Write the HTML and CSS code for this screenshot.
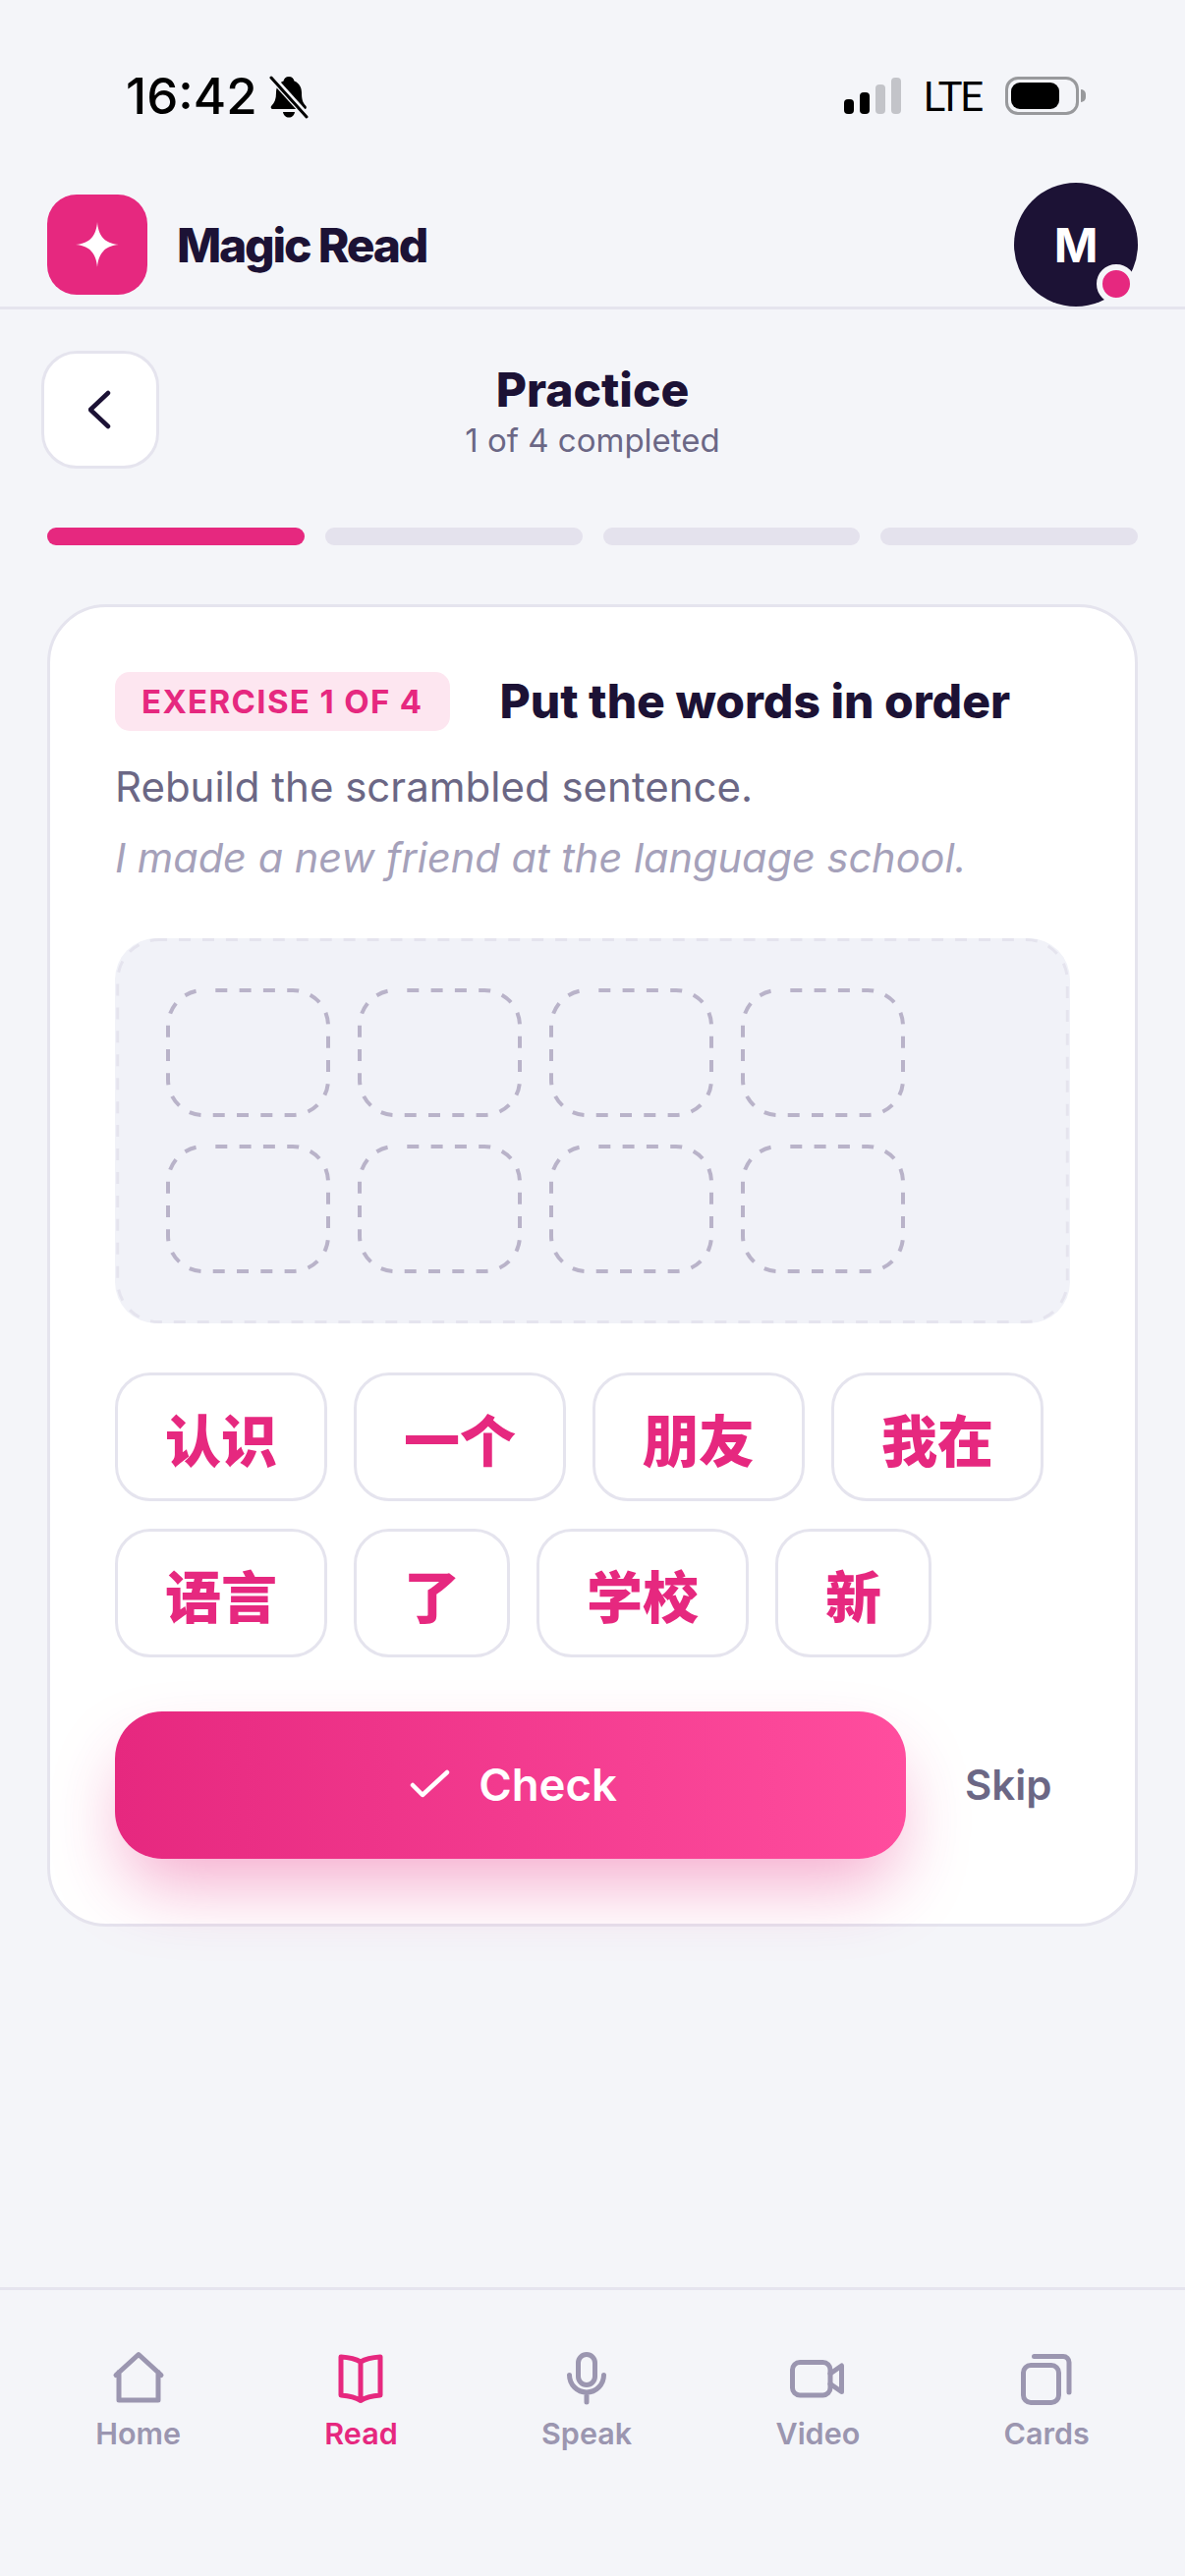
FILE: index.html
```html
<!DOCTYPE html>
<html lang="en">
<head>
  <meta charset="UTF-8">
  <meta name="viewport" content="width=device-width, initial-scale=1.0">
  <title>Magic Read - Practice</title>
  <link rel="stylesheet" href="styles.css">
</head>
<body>
  <div class="app">
    <div class="status-bar">
      <div class="status-left">
        <span class="time">16:42</span>
        <svg class="bell" viewBox="0 0 40 44">
          <path d="M20 1c3 0 5 2 5.500 4.500 5 2 7.500 6.500 7.500 12 0 6 1 10 4 13 1.500 1.500 1 3.500-1 3.500H4c-2.500 0-3-2-1.500-3.500 3-3 4.500-7 4.500-13 0-5.500 2.500-10 7.500-12C15 3 17 1 20 1z"/>
          <path d="M14 37h12c-.5 3.500-3 5.500-6 5.500s-5.500-2-6-5.500z"/>
          <path class="bell-gap" d="M1 0l38 42"/>
          <path class="bell-line" d="M2 2l36 40"/>
        </svg>
      </div>
      <div class="status-right">
        <div class="signal">
          <span class="bar bar-1"></span>
          <span class="bar bar-2"></span>
          <span class="bar bar-3"></span>
          <span class="bar bar-4"></span>
        </div>
        <span class="network">LTE</span>
        <div class="battery"><span class="battery-level"></span></div>
        <span class="battery-tip"></span>
      </div>
    </div>

    <header class="app-header">
      <div class="brand">
        <div class="brand-logo">
          <svg viewBox="0 0 44 46" width="44" height="46">
            <path d="M22 0c1 13 7 22 22 23C29 24 23 33 22 46 21 33 15 24 0 23 15 22 21 13 22 0z" fill="#fff"/>
          </svg>
        </div>
        <span class="brand-name">Magic Read</span>
      </div>
      <div class="avatar">
        M
        <span class="avatar-dot"></span>
      </div>
    </header>

    <main class="content">
      <div class="page-head">
        <button type="button" class="back-btn" aria-label="Back">
          <svg viewBox="0 0 24 40" width="24" height="40">
            <path d="M20 3L2 20l0 0L20 37" fill="none" stroke="#1c1235" stroke-width="4.500" stroke-linecap="round" stroke-linejoin="round"/>
          </svg>
        </button>
        <div class="page-title">
          <h1>Practice</h1>
          <p>1 of 4 completed</p>
        </div>
      </div>

      <div class="progress">
        <span class="step done"></span>
        <span class="step"></span>
        <span class="step"></span>
        <span class="step"></span>
      </div>

      <section class="card">
        <div class="card-head">
          <span class="chip">EXERCISE 1 OF 4</span>
          <h2>Put the words in order</h2>
        </div>
        <p class="hint">Rebuild the scrambled sentence.</p>
        <p class="translation">I made a new friend at the language school.</p>

        <div class="drop-zone">
          <svg class="zone-outline" viewBox="0 0 972 393"><rect x="1.500" y="1.500" width="969" height="390" rx="42"/></svg>
          <svg class="slot" viewBox="0 0 167 131"><rect x="2" y="2" width="163" height="127" rx="36"/></svg>
          <svg class="slot" viewBox="0 0 167 131"><rect x="2" y="2" width="163" height="127" rx="36"/></svg>
          <svg class="slot" viewBox="0 0 167 131"><rect x="2" y="2" width="163" height="127" rx="36"/></svg>
          <svg class="slot" viewBox="0 0 167 131"><rect x="2" y="2" width="163" height="127" rx="36"/></svg>
          <svg class="slot" viewBox="0 0 167 131"><rect x="2" y="2" width="163" height="127" rx="36"/></svg>
          <svg class="slot" viewBox="0 0 167 131"><rect x="2" y="2" width="163" height="127" rx="36"/></svg>
          <svg class="slot" viewBox="0 0 167 131"><rect x="2" y="2" width="163" height="127" rx="36"/></svg>
          <svg class="slot" viewBox="0 0 167 131"><rect x="2" y="2" width="163" height="127" rx="36"/></svg>
        </div>

        <div class="word-bank" lang="zh-CN">
          <button type="button" class="word">认识</button>
          <button type="button" class="word">一个</button>
          <button type="button" class="word">朋友</button>
          <button type="button" class="word">我在</button>
          <button type="button" class="word">语言</button>
          <button type="button" class="word">了</button>
          <button type="button" class="word">学校</button>
          <button type="button" class="word">新</button>
        </div>

        <div class="actions">
          <button type="button" class="check-btn">
            <svg viewBox="0 0 48 30" width="48" height="30">
              <path d="M9 16l10 10L44 3" fill="none" stroke="#fff" stroke-width="4.500" stroke-linecap="round" stroke-linejoin="round"/>
            </svg>
            Check
          </button>
          <button type="button" class="skip-btn">Skip</button>
        </div>
      </section>
    </main>

    <nav class="tab-bar">
      <a class="tab">
        <svg viewBox="0 0 24 24"><path d="M2.800 11L12 2.600l9.200 8.400M4 9.800V21.200h16V9.800"/></svg>
        Home
      </a>
      <a class="tab active">
        <svg viewBox="0 0 24 24"><path d="M12 5.600C10 4.400 7 3.800 4 3.600v15.600c3 .2 6 .8 8 2.200 2-1.400 5-2 8-2.200V3.600c-3 .2-6 .8-8 2zM12 5.600v15.800"/></svg>
        Read
      </a>
      <a class="tab">
        <svg viewBox="0 0 24 24"><rect x="8.600" y="2.600" width="6.800" height="12.400" rx="3.400"/><path d="M5 11a7 7 0 0 0 14 0M12 18v4"/></svg>
        Speak
      </a>
      <a class="tab">
        <svg viewBox="0 0 24 24"><rect x="1.800" y="5.800" width="15.400" height="13.400" rx="3"/><path d="M17.200 10.400L21.800 7.200v10.600l-4.600-3.200"/></svg>
        Video
      </a>
      <a class="tab">
        <svg viewBox="0 0 24 24"><rect x="2.600" y="7" width="14.400" height="15.200" rx="3"/><path d="M7 3.400h11.800a2.400 2.400 0 0 1 2.400 2.400V18"/></svg>
        Cards
      </a>
    </nav>
  </div>
</body>
</html>
```

FILE: styles.css
```css
* {
  box-sizing: border-box;
}

body {
  margin: 0;
  background: #f4f5f9;
  color: #1c1235;
  font-family: Inter, "Noto Sans CJK SC", sans-serif;
}

button {
  font-family: inherit;
  cursor: pointer;
}

.app {
  display: flex;
  flex-direction: column;
  width: 1206px;
  height: 2622px;
  overflow: hidden;
}

/* status bar */
.status-bar {
  display: flex;
  justify-content: space-between;
  height: 186px;
  padding: 70px 101px 0 128px;
}

.status-left {
  display: flex;
  align-items: flex-start;
  gap: 12px;
  height: 56px;
}

.time {
  color: #000;
  font-size: 51px;
  font-weight: 500;
  line-height: 56px;
}

.bell {
  width: 40px;
  height: 44px;
  margin-top: 7px;
}

.bell-gap {
  fill: none;
  stroke: #f4f5f9;
  stroke-width: 7;
}

.bell-line {
  fill: none;
  stroke: #000;
  stroke-width: 3;
  stroke-linecap: round;
}

.status-right {
  display: flex;
  align-items: flex-start;
  height: 56px;
}

.signal {
  display: flex;
  align-items: flex-end;
  gap: 6px;
  height: 37px;
  margin-top: 9px;
}

.bar {
  width: 10px;
  border-radius: 4px;
  background: #000;
}

.bar-1 { height: 15px; }
.bar-2 { height: 22px; }
.bar-3 { height: 30px; background: #c3c4c9; }
.bar-4 { height: 37px; background: #c3c4c9; }

.network {
  margin-left: 23px;
  color: #000;
  font-family: Roboto, sans-serif;
  font-size: 42px;
  letter-spacing: -2.200px;
  line-height: 46px;
  margin-top: 6px;
}

.battery {
  width: 75px;
  height: 39px;
  margin-left: 24px;
  margin-top: 8px;
  padding: 3px;
  border: 3px solid #98999c;
  border-radius: 13px;
}

.battery-level {
  display: block;
  width: 49px;
  height: 27px;
  border-radius: 9px;
  background: #000;
}

.battery-tip {
  width: 5px;
  height: 13px;
  margin: 21px 0 0 2px;
  border-radius: 0 6px 6px 0;
  background: #98999c;
}

/* app header */
.app-header {
  display: flex;
  align-items: center;
  justify-content: space-between;
  height: 129px;
  padding: 0 48px;
  border-bottom: 3px solid #e5e4ee;
}

.brand {
  display: flex;
  align-items: center;
  gap: 30px;
}

.brand-logo {
  display: flex;
  align-items: center;
  justify-content: center;
  width: 102px;
  height: 102px;
  border-radius: 30px;
  background: #e6287f;
}

.brand-name {
  font-size: 48px;
  font-weight: 800;
  letter-spacing: -2.200px;
}

.avatar {
  position: relative;
  display: flex;
  align-items: center;
  justify-content: center;
  width: 126px;
  height: 126px;
  border-radius: 50%;
  background: #1c1235;
  color: #fff;
  font-size: 48px;
  font-weight: 700;
}

.avatar-dot {
  position: absolute;
  right: 2px;
  bottom: 3px;
  width: 40px;
  height: 40px;
  border: 6px solid #f4f5f9;
  border-radius: 50%;
  background: #e6287f;
}

/* practice */
.content {
  flex: 1;
}

.page-head {
  display: grid;
  grid-template-columns: 120px 1fr 120px;
  align-items: center;
  padding: 42px 42px 0;
}

.back-btn {
  display: flex;
  align-items: center;
  justify-content: center;
  width: 120px;
  height: 120px;
  padding: 0;
  border: 3px solid #e5e4ee;
  border-radius: 36px;
  background: #fff;
}

.page-title {
  padding-top: 3px;
  text-align: center;
}

.page-title h1 {
  margin: 0;
  font-size: 48px;
  font-weight: 800;
  line-height: 58px;
}

.page-title p {
  margin: 0;
  color: #6b6785;
  font-size: 33px;
  line-height: 44px;
}

.progress {
  display: grid;
  grid-template-columns: repeat(4, 1fr);
  gap: 21px;
  margin-top: 60px;
  padding: 0 48px;
}

.step {
  height: 18px;
  border-radius: 9px;
  background: #e4e2ed;
}

.step.done {
  background: #e6287f;
}

.card {
  margin: 60px 48px 0;
  padding: 66px;
  border: 3px solid #e5e4ee;
  border-radius: 60px;
  background: #fff;
}

.card-head {
  display: flex;
  align-items: center;
  gap: 51px;
}

.chip {
  padding: 0 27px;
  border-radius: 15px;
  background: #fde6f0;
  color: #e6287f;
  font-size: 33px;
  font-weight: 700;
  letter-spacing: 1.350px;
  line-height: 60px;
  white-space: nowrap;
}

.card-head h2 {
  margin: 0;
  font-size: 48px;
  font-weight: 800;
  line-height: 60px;
  white-space: nowrap;
}

.hint {
  margin: 27px 0 0;
  color: #6b6785;
  font-size: 42px;
  line-height: 60px;
}

.translation {
  margin: 12px 0 0;
  color: #a5a1ba;
  font-size: 41.500px;
  font-style: italic;
  line-height: 60px;
}

.drop-zone {
  position: relative;
  display: flex;
  flex-wrap: wrap;
  gap: 28px;
  margin-top: 52px;
  padding: 51px 52px;
  border-radius: 42px;
  background: #f1f2f8;
}

.zone-outline {
  position: absolute;
  top: 0;
  left: 0;
  width: 100%;
  height: 100%;
}

.zone-outline rect {
  fill: none;
  stroke: #e5e4ee;
  stroke-width: 3;
  stroke-dasharray: 12 12;
  stroke-dashoffset: 3.500;
}

.slot {
  width: 167px;
  height: 131px;
}

.slot rect {
  fill: none;
  stroke: #b9b3c9;
  stroke-width: 4;
  stroke-dasharray: 12 12.300;
  stroke-dashoffset: 12;
}

.word-bank {
  display: flex;
  flex-wrap: wrap;
  gap: 28px 27px;
  margin-top: 50px;
}

.word {
  height: 131px;
  padding: 0 48px;
  border: 3px solid #e5e4ee;
  border-radius: 36px;
  background: #fff;
  color: #e6287f;
  font-family: "Noto Sans CJK SC", sans-serif;
  font-size: 57px;
  font-weight: 900;
}

.actions {
  display: flex;
  align-items: center;
  margin-top: 55px;
}

.check-btn {
  display: flex;
  align-items: center;
  justify-content: center;
  gap: 28px;
  width: 805px;
  height: 150px;
  padding: 0 0 2px;
  border: 0;
  border-radius: 48px;
  background: linear-gradient(90deg, #e6287f, #ff4d9e);
  box-shadow: 0 36px 72px -12px rgba(230, 40, 127, 0.4);
  color: #fff;
  font-size: 45.500px;
  font-weight: 600;
}

.skip-btn {
  margin-left: 60px;
  padding: 0 0 2px;
  border: 0;
  background: none;
  color: #6b6785;
  font-size: 42px;
  font-weight: 600;
}

/* bottom tabs */
.tab-bar {
  display: flex;
  justify-content: space-around;
  height: 294px;
  padding: 59px 24px 0;
  border-top: 3px solid #e5e4ee;
}

.tab {
  display: flex;
  flex-direction: column;
  align-items: center;
  gap: 6px;
  color: #9b96b0;
  font-size: 30.500px;
  font-weight: 600;
  line-height: 42px;
}

.tab svg {
  width: 60px;
  height: 60px;
  fill: none;
  stroke: currentColor;
  stroke-width: 2;
  stroke-linecap: round;
  stroke-linejoin: round;
}

.tab.active {
  color: #e6287f;
}
```
